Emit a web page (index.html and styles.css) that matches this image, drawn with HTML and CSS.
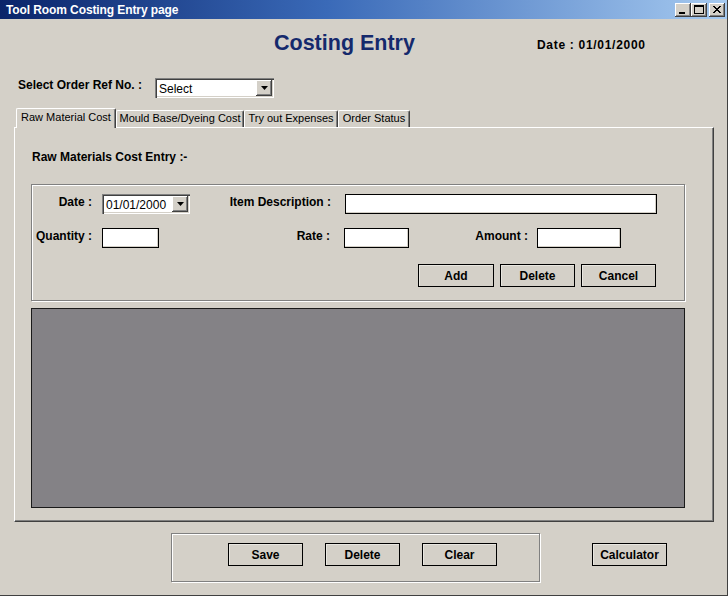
FILE: index.html
```html
<!DOCTYPE html>
<html>
<head>
<meta charset="utf-8">
<link rel="stylesheet" href="styles.css">
</head>
<body>
<div class="window">
  <div class="titlebar">
    <span class="title">Tool Room Costing Entry page</span>
    <div class="wbtns">
      <span class="wbtn"><svg width="16" height="14" viewBox="0 0 16 14"><rect x="4" y="9" width="6" height="2" fill="#000"/></svg></span>
      <span class="wbtn"><svg width="16" height="14" viewBox="0 0 16 14"><rect x="3.5" y="2.5" width="9" height="8" fill="none" stroke="#000"/><rect x="3" y="2" width="10" height="2" fill="#000"/></svg></span>
      <span class="wbtn close"><svg width="16" height="14" viewBox="0 0 16 14"><path d="M4 3 L11 10 M5 3 L12 10 M11 3 L4 10 M12 3 L5 10" stroke="#000" stroke-width="1"/></svg></span>
    </div>
  </div>
  <div class="client">
    <div class="header">
      <h1 class="heading">Costing Entry</h1>
      <div class="hdate">Date : 01/01/2000</div>
    </div>
    <div class="order-row">
      <span class="order-label">Select Order Ref No. :</span>
      <div class="combo">
        <span class="combo-text">Select</span>
        <span class="drop"><svg width="7" height="4" viewBox="0 0 7 4"><path d="M0 0 H7 L3.5 4 Z" fill="#000"/></svg></span>
      </div>
    </div>
    <div class="tabs">
      <div class="tab active">Raw Material Cost</div>
      <div class="tab t2">Mould Base/Dyeing Cost</div>
      <div class="tab t3">Try out Expenses</div>
      <div class="tab t4">Order Status</div>
    </div>
    <div class="panel">
      <div class="section-title">Raw Materials Cost Entry :-</div>
      <div class="group">
        <div class="frow">
          <span class="lbl l1">Date :</span>
          <div class="picker">
            <span class="picker-text">01/01/2000</span>
            <span class="drop"><svg width="7" height="4" viewBox="0 0 7 4"><path d="M0 0 H7 L3.5 4 Z" fill="#000"/></svg></span>
          </div>
          <span class="lbl l2">Item Description :</span>
          <span class="input desc"></span>
        </div>
        <div class="frow r2">
          <span class="lbl l1">Quantity :</span>
          <span class="input qty"></span>
          <span class="lbl l3">Rate :</span>
          <span class="input rate"></span>
          <span class="lbl l4">Amount :</span>
          <span class="input amt"></span>
        </div>
        <div class="brow">
          <button class="btn add">Add</button>
          <button class="btn">Delete</button>
          <button class="btn">Cancel</button>
        </div>
      </div>
      <div class="grid"></div>
    </div>
    <div class="footer">
      <div class="footgroup">
        <button class="btn">Save</button>
        <button class="btn">Delete</button>
        <button class="btn">Clear</button>
      </div>
      <button class="btn calc">Calculator</button>
    </div>
  </div>
</div>
</body>
</html>
```
FILE: styles.css
```css
* { box-sizing: border-box; margin: 0; padding: 0; }
html, body { width: 728px; height: 596px; overflow: hidden; }
body {
  background: #d4d0c8;
  font-family: "Liberation Sans", Arial, sans-serif;
  font-size: 12px;
  color: #000;
}
.window {
  width: 728px;
  height: 596px;
  border-right: 1px solid #404040;
  border-bottom: 1px solid #404040;
  background: #d4d0c8;
}
.titlebar {
  height: 19px;
  display: flex;
  align-items: center;
  padding-left: 6px;
  padding-right: 2px;
  background: linear-gradient(to right, #0a246a 0%, #3a6ab8 45%, #a6caf0 100%);
}
.title {
  color: #fff;
  font-weight: bold;
  font-size: 12px;
  letter-spacing: -0.1px;
}
.wbtns { margin-left: auto; display: flex; }
.wbtn {
  width: 16px;
  height: 14px;
  background: #d4d0c8;
  box-shadow: inset -1px -1px #404040, inset 1px 1px #fff, inset -2px -2px #808080;
  display: block;
}
.wbtn svg { display: block; }
.wbtn.close { margin-left: 2px; }

.client { padding-left: 14px; }

.header {
  display: flex;
  align-items: flex-start;
  padding-top: 10px;
  height: 38px;
}
.heading {
  margin-left: 260px;
  width: 263px;
  font-size: 21.5px;
  line-height: 28px;
  font-weight: bold;
  color: #15296c;
}
.hdate {
  margin-top: 8px;
  line-height: 16px;
  font-weight: bold;
  letter-spacing: 0.7px;
}

.order-row {
  margin-top: 21px;
  height: 20px;
  display: flex;
  align-items: center;
}
.order-label {
  margin-left: 4px;
  width: 137px;
  font-weight: bold;
  line-height: 16px;
  margin-top: -7px;
}
.combo, .picker {
  height: 20px;
  background: #fff;
  box-shadow: inset 1px 1px #808080, inset 2px 2px #404040, inset -1px -1px #fff, inset -2px -2px #d4d0c8;
  display: flex;
  align-items: center;
  padding: 2px;
}
.combo { width: 119px; }
.combo-text, .picker-text {
  flex: 1;
  padding-left: 2px;
  font-size: 12px;
  line-height: 16px;
  padding-top: 1px;
}
.drop {
  width: 16px;
  height: 16px;
  background: #d4d0c8;
  box-shadow: inset -1px -1px #404040, inset 1px 1px #fff, inset -2px -2px #808080;
  display: flex;
  align-items: center;
  justify-content: center;
}
.drop svg { display: block; }

.tabs {
  margin-top: 10px;
  margin-left: 2px;
  height: 19px;
  display: flex;
  align-items: flex-end;
  position: relative;
  z-index: 2;
}
.tab {
  height: 17px;
  border-top: 1px solid #fff;
  border-left: 1px solid #fff;
  border-right: 1px solid #404040;
  box-shadow: inset -1px 0 #808080;
  border-radius: 2px 2px 0 0;
  font-size: 11px;
  line-height: 15px;
  text-align: center;
  background: #d4d0c8;
}
.tab.active {
  width: 100px;
  height: 20px;
  margin-bottom: -1px;
  line-height: 15px;
  padding-top: 1px;
}
.tab.t2 { width: 128px; }
.tab.t3 { width: 94px; }
.tab.t4 { width: 72px; }

.panel {
  width: 700px;
  height: 395px;
  border-top: 1px solid #fff;
  border-left: 1px solid #fff;
  border-right: 1px solid #404040;
  border-bottom: 1px solid #404040;
  box-shadow: inset -1px -1px #808080;
  padding: 21px 0 0 16px;
  position: relative;
  z-index: 1;
}
.section-title {
  font-weight: bold;
  line-height: 16px;
  margin-left: 1px;
}
.group {
  margin-top: 19px;
  width: 654px;
  height: 117px;
  border: 1px solid #808080;
  box-shadow: inset 1px 1px #fff, 1px 1px 0 #fff;
  padding-top: 9px;
}
.frow {
  display: flex;
  align-items: flex-start;
  height: 20px;
}
.frow.r2 { margin-top: 14px; }
.lbl {
  font-weight: bold;
  line-height: 16px;
  text-align: right;
  display: block;
}
.l1 { width: 60px; margin-right: 10px; }
.l2 { width: 141px; margin-right: 14px; }
.l3 { width: 171px; margin-right: 14px; }
.l4 { width: 119px; margin-right: 9px; }
.picker { width: 88px; }
.input {
  display: block;
  height: 20px;
  background: #fff;
  border: 1px solid #000;
  box-shadow: inset -1px -1px #d4d0c8;
}
.desc { width: 312px; }
.qty { width: 57px; }
.rate { width: 65px; }
.amt { width: 84px; }
.brow {
  margin-top: 16px;
  display: flex;
  justify-content: flex-end;
  gap: 6px;
  padding-right: 28px;
}
.btn {
  width: 75px;
  height: 23px;
  background: #d4d0c8;
  border: 1px solid #000;
  box-shadow: inset 1px 1px #e8e6e0;
  font-family: "Liberation Sans", Arial, sans-serif;
  font-weight: bold;
  font-size: 12px;
  color: #000;
}
.btn.add { width: 76px; }
.grid {
  margin-top: 7px;
  width: 654px;
  height: 200px;
  background: #848286;
  border: 1px solid #1a1a1a;
}
.footer {
  margin-top: 11px;
  display: flex;
  align-items: flex-start;
}
.footgroup {
  margin-left: 157px;
  width: 369px;
  height: 49px;
  border: 1px solid #808080;
  box-shadow: inset 1px 1px #fff, 1px 1px 0 #fff;
  padding: 9px 0 0 56px;
  display: flex;
  gap: 22px;
}
.calc { margin-left: 52px; margin-top: 10px; }
```
